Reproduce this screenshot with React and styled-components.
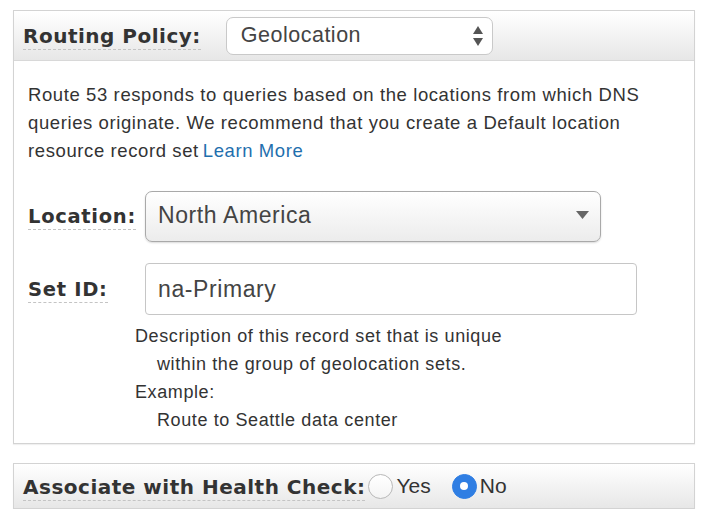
import React from 'react';
import styled, { createGlobalStyle } from 'styled-components';

const GlobalStyle = createGlobalStyle`
  html, body {
    margin: 0;
    padding: 0;
    background: #fff;
  }
  body {
    font-family: "Liberation Sans", Arial, sans-serif;
    color: #333;
  }
`;

const Page = styled.div`
  width: 682px;
  padding: 10px 0 0 13px;
  display: flex;
  flex-direction: column;
  gap: 19px;
`;

const Panel = styled.section`
  border: 1px solid #d3d3d3;
  box-shadow: 0 1px 1px rgba(0, 0, 0, 0.06);
  background: #fff;
`;

const PanelHeader = styled.div`
  display: flex;
  align-items: center;
  height: ${(p) => p.$height || 49}px;
  padding-left: 9px;
  background: linear-gradient(#ffffff, #e7e7e7);
  border-bottom: ${(p) => (p.$flat ? 'none' : '1px solid #d8d8d8')};
`;

const HeaderLabel = styled.span`
  font-family: "DejaVu Sans", Verdana, sans-serif;
  font-weight: bold;
  font-size: 20px;
  letter-spacing: 0.5px;
  color: #333;
  border-bottom: 1px dashed #c4c4c4;
  padding-bottom: 1px;
  margin-top: 3px;
`;

const FormLabel = styled(HeaderLabel)`
  font-size: 19.5px;
  letter-spacing: 0.7px;
`;

const PolicySelect = styled.div`
  margin-left: ${(p) => p.$offset}px;
  width: 267px;
  height: 38px;
  box-sizing: border-box;
  border: 1px solid #c9c9c9;
  border-radius: 7px;
  background: #fff;
  display: flex;
  align-items: center;
  justify-content: space-between;
  padding: 0 8px 0 14px;
  font-size: 21.5px;
  letter-spacing: 0.5px;
  color: #444;
`;

const Body = styled.div`
  padding: 20px 15px 9px 14px;
`;

const Intro = styled.p`
  margin: 0 0 26px;
  max-width: 620px;
  font-size: 18.5px;
  letter-spacing: 0.6px;
  line-height: 28px;
  color: #333;
`;

const Link = styled.a`
  color: #1f6fae;
  text-decoration: none;
  margin-left: 4px;
`;

const Row = styled.div`
  display: grid;
  grid-template-columns: 117px auto;
  align-items: center;
  margin-bottom: ${(p) => p.$gap || 0}px;
`;

const DropDown = styled.div`
  width: 456px;
  height: 51px;
  box-sizing: border-box;
  border: 1px solid #a9a9a9;
  border-radius: 7px;
  background: linear-gradient(#ffffff, #ececec);
  box-shadow: 0 1px 2px rgba(0, 0, 0, 0.15);
  display: flex;
  align-items: center;
  justify-content: space-between;
  padding: 0 11px 3px 12px;
  font-size: 23px;
  letter-spacing: 0.6px;
  color: #444;
`;

const TextBox = styled.div`
  width: 492px;
  height: 52px;
  box-sizing: border-box;
  border: 1px solid #c6c6c6;
  border-radius: 4px;
  background: #fff;
  display: flex;
  align-items: center;
  padding: 0 12px;
  font-size: 23px;
  letter-spacing: 0.6px;
  color: #444;
`;

const Help = styled.div`
  margin-left: 107px;
  margin-top: 7px;
  font-size: 18px;
  letter-spacing: 0.6px;
  line-height: 28px;
  color: #333;
`;

const Indent = styled.div`
  padding-left: 22px;
`;

const RadioGroup = styled.div`
  display: flex;
  align-items: center;
  margin-left: 3px;
  font-size: 21px;
  color: #333;
`;

const RadioOption = styled.label`
  display: flex;
  align-items: center;
  gap: 3px;
  margin-right: 21px;
`;

const RadioDot = styled.span`
  width: 25px;
  height: 25px;
  box-sizing: border-box;
  border-radius: 50%;
  border: 1px solid ${(p) => (p.$checked ? '#2f7ee3' : '#b8b8b8')};
  background: ${(p) => (p.$checked ? '#2f7ee3' : 'linear-gradient(#fff, #f4f4f4)')};
  display: flex;
  align-items: center;
  justify-content: center;
  &::after {
    content: '';
    display: ${(p) => (p.$checked ? 'block' : 'none')};
    width: 8px;
    height: 8px;
    border-radius: 50%;
    background: #fff;
  }
`;

const UpDown = () => (
  <svg width="12" height="22" viewBox="0 0 12 22">
    <path d="M6 1 L11 9 H1 Z" fill="#555" />
    <path d="M6 21 L11 13 H1 Z" fill="#555" />
  </svg>
);

const Caret = () => (
  <svg width="13" height="8" viewBox="0 0 13 8">
    <path d="M0 0 H13 L6.5 8 Z" fill="#666" />
  </svg>
);

const App = () => (
  <>
    <GlobalStyle />
    <Page>
      <Panel>
        <PanelHeader>
          <HeaderLabel>Routing Policy:</HeaderLabel>
          <PolicySelect $offset={25}>
            Geolocation
            <UpDown />
          </PolicySelect>
        </PanelHeader>
        <Body>
          <Intro>
            Route 53 responds to queries based on the locations from which DNS
            queries originate. We recommend that you create a Default location
            resource record set
            <Link href="#">Learn More</Link>
          </Intro>
          <Row $gap={21}>
            <span><FormLabel>Location:</FormLabel></span>
            <DropDown>
              North America
              <Caret />
            </DropDown>
          </Row>
          <Row>
            <span><FormLabel>Set ID:</FormLabel></span>
            <TextBox>na-Primary</TextBox>
          </Row>
          <Help>
            Description of this record set that is unique
            <Indent>within the group of geolocation sets.</Indent>
            Example:
            <Indent>Route to Seattle data center</Indent>
          </Help>
        </Body>
      </Panel>
      <Panel>
        <PanelHeader $height={44} $flat>
          <HeaderLabel>Associate with Health Check:</HeaderLabel>
          <RadioGroup>
            <RadioOption>
              <RadioDot />
              Yes
            </RadioOption>
            <RadioOption>
              <RadioDot $checked />
              No
            </RadioOption>
          </RadioGroup>
        </PanelHeader>
      </Panel>
    </Page>
  </>
);

export default App;
